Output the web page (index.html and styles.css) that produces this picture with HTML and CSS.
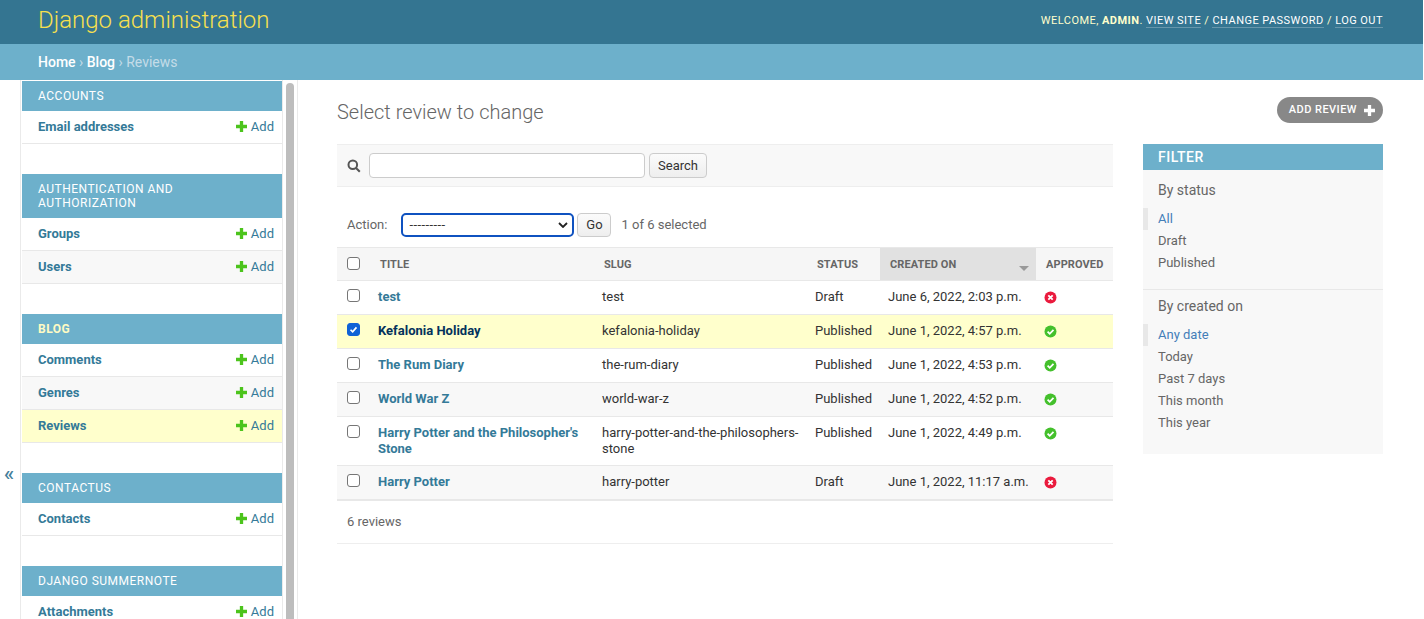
FILE: index.html
```html
<!DOCTYPE html>
<html lang="en">
<head>
<meta charset="utf-8">
<title>Select review to change | Django site admin</title>
<link rel="stylesheet" href="styles.css">
</head>
<body>
<div class="page">
  <header class="header">
    <div class="branding">Django administration</div>
    <div class="user-tools">WELCOME, <strong>ADMIN</strong>. <a href="#">VIEW SITE</a> / <a href="#">CHANGE PASSWORD</a> / <a href="#">LOG OUT</a></div>
  </header>
  <div class="breadcrumbs"><a href="#">Home</a> › <a href="#">Blog</a> › Reviews</div>
  <div class="main">
    <div class="toggle">«</div>
    <nav class="sidebar">
      <div class="modules">
        <section class="module">
          <h2 class="caption">ACCOUNTS</h2>
          <div class="nav-row"><a href="#">Email addresses</a><span class="add"><svg class="plus" viewBox="1 1 10 10"><path d="M4.500 1h3v3.500H11v3H7.500V11h-3V7.500H1v-3h3.500z"/></svg>Add</span></div>
        </section>
        <section class="module">
          <h2 class="caption">AUTHENTICATION AND AUTHORIZATION</h2>
          <div class="nav-row"><a href="#">Groups</a><span class="add"><svg class="plus" viewBox="1 1 10 10"><path d="M4.500 1h3v3.500H11v3H7.500V11h-3V7.500H1v-3h3.500z"/></svg>Add</span></div>
          <div class="nav-row stripe"><a href="#">Users</a><span class="add"><svg class="plus" viewBox="1 1 10 10"><path d="M4.500 1h3v3.500H11v3H7.500V11h-3V7.500H1v-3h3.500z"/></svg>Add</span></div>
        </section>
        <section class="module">
          <h2 class="caption current">BLOG</h2>
          <div class="nav-row"><a href="#">Comments</a><span class="add"><svg class="plus" viewBox="1 1 10 10"><path d="M4.500 1h3v3.500H11v3H7.500V11h-3V7.500H1v-3h3.500z"/></svg>Add</span></div>
          <div class="nav-row stripe"><a href="#">Genres</a><span class="add"><svg class="plus" viewBox="1 1 10 10"><path d="M4.500 1h3v3.500H11v3H7.500V11h-3V7.500H1v-3h3.500z"/></svg>Add</span></div>
          <div class="nav-row selected"><a href="#">Reviews</a><span class="add"><svg class="plus" viewBox="1 1 10 10"><path d="M4.500 1h3v3.500H11v3H7.500V11h-3V7.500H1v-3h3.500z"/></svg>Add</span></div>
        </section>
        <section class="module">
          <h2 class="caption">CONTACTUS</h2>
          <div class="nav-row"><a href="#">Contacts</a><span class="add"><svg class="plus" viewBox="1 1 10 10"><path d="M4.500 1h3v3.500H11v3H7.500V11h-3V7.500H1v-3h3.500z"/></svg>Add</span></div>
        </section>
        <section class="module">
          <h2 class="caption">DJANGO SUMMERNOTE</h2>
          <div class="nav-row"><a href="#">Attachments</a><span class="add"><svg class="plus" viewBox="1 1 10 10"><path d="M4.500 1h3v3.500H11v3H7.500V11h-3V7.500H1v-3h3.500z"/></svg>Add</span></div>
        </section>
      </div>
      <div class="scroll-track"><div class="scroll-thumb"></div></div>
    </nav>
    <main class="content">
      <div class="title-row">
        <h1 class="title">Select review to change</h1>
        <a class="add-btn" href="#">ADD REVIEW<svg class="add-btn-icon" viewBox="1 1 10 10"><path d="M4.500 1h3v3.500H11v3H7.500V11h-3V7.500H1v-3h3.500z"/></svg></a>
      </div>
      <div class="columns">
        <div class="changelist">
          <div class="toolbar">
            <svg class="search-icon" viewBox="0 0 14 14"><circle cx="5.800" cy="5.800" r="4.300"/><path d="M9 9l3.800 3.800"/></svg>
            <input class="search-input" type="text">
            <button class="btn search-btn" type="button">Search</button>
          </div>
          <div class="actions">
            <span class="action-label">Action:</span>
            <select class="action-select"><option>---------</option></select>
            <button class="btn go-btn" type="button">Go</button>
            <span class="counter">1 of 6 selected</span>
          </div>
          <table class="results">
            <colgroup><col class="c-check"><col class="c-title"><col class="c-slug"><col class="c-status"><col class="c-created"><col class="c-approved"></colgroup>
            <thead>
              <tr>
                <th class="check"><input type="checkbox"></th>
                <th>TITLE</th><th>SLUG</th><th>STATUS</th>
                <th class="sorted">CREATED ON<span class="sort-arrow"></span></th>
                <th>APPROVED</th>
              </tr>
            </thead>
            <tbody>
              <tr>
                <td class="check"><input type="checkbox"></td>
                <td><a class="row-link" href="#">test</a></td><td>test</td><td>Draft</td><td class="created">June 6, 2022, 2:03 p.m.</td>
                <td><svg class="state" viewBox="0 0 13 13"><circle class="no" cx="6.500" cy="6.500" r="6"/><path class="mark" d="M4.300 4.300l4.400 4.400M8.700 4.300l-4.400 4.400"/></svg></td>
              </tr>
              <tr class="row-selected">
                <td class="check"><input type="checkbox" checked></td>
                <td><a class="row-link" href="#">Kefalonia Holiday</a></td><td>kefalonia-holiday</td><td>Published</td><td class="created">June 1, 2022, 4:57 p.m.</td>
                <td><svg class="state" viewBox="0 0 13 13"><circle class="yes" cx="6.500" cy="6.500" r="6"/><path class="mark" d="M3.600 6.700l2.100 2.100 3.800-3.900"/></svg></td>
              </tr>
              <tr>
                <td class="check"><input type="checkbox"></td>
                <td><a class="row-link" href="#">The Rum Diary</a></td><td>the-rum-diary</td><td>Published</td><td class="created">June 1, 2022, 4:53 p.m.</td>
                <td><svg class="state" viewBox="0 0 13 13"><circle class="yes" cx="6.500" cy="6.500" r="6"/><path class="mark" d="M3.600 6.700l2.100 2.100 3.800-3.900"/></svg></td>
              </tr>
              <tr class="row-alt">
                <td class="check"><input type="checkbox"></td>
                <td><a class="row-link" href="#">World War Z</a></td><td>world-war-z</td><td>Published</td><td class="created">June 1, 2022, 4:52 p.m.</td>
                <td><svg class="state" viewBox="0 0 13 13"><circle class="yes" cx="6.500" cy="6.500" r="6"/><path class="mark" d="M3.600 6.700l2.100 2.100 3.800-3.900"/></svg></td>
              </tr>
              <tr>
                <td class="check"><input type="checkbox"></td>
                <td><a class="row-link" href="#">Harry Potter and the Philosopher's Stone</a></td><td>harry-potter-and-the-philosophers-stone</td><td>Published</td><td class="created">June 1, 2022, 4:49 p.m.</td>
                <td><svg class="state" viewBox="0 0 13 13"><circle class="yes" cx="6.500" cy="6.500" r="6"/><path class="mark" d="M3.600 6.700l2.100 2.100 3.800-3.900"/></svg></td>
              </tr>
              <tr class="row-alt">
                <td class="check"><input type="checkbox"></td>
                <td><a class="row-link" href="#">Harry Potter</a></td><td>harry-potter</td><td>Draft</td><td class="created">June 1, 2022, 11:17 a.m.</td>
                <td><svg class="state" viewBox="0 0 13 13"><circle class="no" cx="6.500" cy="6.500" r="6"/><path class="mark" d="M4.300 4.300l4.400 4.400M8.700 4.300l-4.400 4.400"/></svg></td>
              </tr>
            </tbody>
          </table>
          <p class="paginator">6 reviews</p>
        </div>
        <aside class="filter">
          <h2 class="filter-title">FILTER</h2>
          <h3 class="filter-heading">By status</h3>
          <ul class="filter-list">
            <li class="on"><a href="#">All</a></li>
            <li><a href="#">Draft</a></li>
            <li><a href="#">Published</a></li>
          </ul>
          <h3 class="filter-heading divided">By created on</h3>
          <ul class="filter-list">
            <li class="on"><a href="#">Any date</a></li>
            <li><a href="#">Today</a></li>
            <li><a href="#">Past 7 days</a></li>
            <li><a href="#">This month</a></li>
            <li><a href="#">This year</a></li>
          </ul>
        </aside>
      </div>
    </main>
  </div>
</div>
</body>
</html>
```
FILE: styles.css
```css
* { box-sizing: border-box; }
html, body { margin: 0; height: 100%; overflow: hidden; background: #fff; }
body { font-family: Roboto, "Liberation Sans", sans-serif; font-size: 14px; color: #333; }
a { text-decoration: none; color: inherit; }
h1, h2, h3, p, ul { margin: 0; padding: 0; }
ul { list-style: none; }
.page { width: 1423px; height: 619px; display: flex; flex-direction: column; overflow: hidden; }

.header { height: 44px; flex: none; background: #347591; padding: 0 40px 4px 38px; display: flex; justify-content: space-between; align-items: center; }
.branding { font-size: 24px; font-weight: 300; color: #f8e04e; }
.user-tools { font-size: 11px; letter-spacing: 0.46px; color: #ffc; }
.user-tools strong { font-weight: 700; }
.user-tools a { color: #fff; border-bottom: 1px solid rgba(255,255,255,0.25); }

.breadcrumbs { height: 36px; flex: none; background: #6db0cb; color: #c4dce8; padding: 0 38px; font-size: 14px; line-height: 36px; }
.breadcrumbs a { color: #fff; font-weight: 500; }

.main { flex: 1; display: flex; min-height: 0; }
.toggle { width: 21px; flex: none; border-right: 1px solid #eaeaea; color: #447e9b; font-size: 21px; font-weight: 500; display: flex; justify-content: center; padding: 383px 2px 0 0; line-height: 1; }
.sidebar { width: 277px; flex: none; border-right: 1px solid #eaeaea; display: flex; overflow: hidden; }
.modules { width: 262px; flex: none; padding-top: 1px; border-right: 1px solid #eaeaea; }
.module { margin-bottom: 30px; }
.caption { background: #6db0cb; color: #fff; font-size: 12px; font-weight: 400; letter-spacing: 0.5px; line-height: 14px; padding: 8px 16px; margin-left: 1px; }
.caption.current { font-weight: 700; color: #fffbc4; }
.nav-row { height: 33px; border-bottom: 1px solid #e8e8e8; padding: 0 8px 2px 16px; margin-left: 1px; display: flex; justify-content: space-between; align-items: center; font-size: 13px; }
.nav-row a { color: #347a98; font-weight: 700; }
.nav-row.stripe { background: #f8f8f8; }
.nav-row.selected { background: #ffc; }
.add { color: #347a98; display: flex; align-items: center; }
.plus { width: 11px; height: 11px; fill: #4cc41c; margin-right: 4px; }
.scroll-track { flex: 1; padding: 3px 3px 0; }
.scroll-thumb { width: 8px; height: 600px; background: #bdbdbd; border-radius: 4px 4px 0 0; }

.content { flex: 1; min-width: 0; padding: 0 40px 0 39px; }
.title-row { display: flex; justify-content: space-between; align-items: center; height: 64px; }
.title { font-size: 20px; font-weight: 300; color: #666; }
.add-btn { background: #888; color: #fff; border-radius: 15px; height: 26px; padding: 0 8px 1px 12px; display: flex; align-items: center; font-size: 11px; font-weight: 500; letter-spacing: 0.45px; margin-top: -4px; }
.add-btn-icon { width: 11px; height: 11px; fill: #fff; margin: 1px 0 0 7px; }
.columns { display: flex; justify-content: space-between; align-items: flex-start; }

.changelist { width: 776px; }
.toolbar { height: 43px; background: #f8f8f8; border-top: 1px solid #eee; border-bottom: 1px solid #eee; display: flex; align-items: center; padding-left: 10px; }
.search-icon { width: 14px; height: 14px; fill: none; stroke: #555; stroke-width: 2; margin-right: 8px; }
.search-input { width: 276px; height: 25px; border: 1px solid #ccc; border-radius: 4px; background: #fff; padding: 2px 5px; margin-right: 4px; }
.btn { background: linear-gradient(#fbfbfb, #eee); border: 1px solid #ccc; border-radius: 4px; color: #333; font-family: inherit; font-size: 13px; padding: 0; }
.search-btn { width: 58px; height: 25px; }
.actions { height: 60px; display: flex; align-items: center; padding-left: 10px; font-size: 13px; color: #666; padding-top: 15px; }
.action-label { margin-right: 14px; }
.action-select { appearance: none; width: 173px; height: 24px; border: 2px solid #0f52c0; border-radius: 5px; background: #fff url("data:image/svg+xml,%3Csvg xmlns='http://www.w3.org/2000/svg' width='10' height='6'%3E%3Cpath d='M1 1l4 4 4-4' fill='none' stroke='%23222' stroke-width='1.800'/%3E%3C/svg%3E") no-repeat right 4px center; font-family: inherit; font-size: 13px; letter-spacing: 0.4px; padding: 0 6px; color: #333; margin-right: 3px; }
.go-btn { width: 34px; height: 24px; margin-right: 10px; }
.counter { color: #666; }

.results { width: 776px; table-layout: fixed; border-collapse: collapse; font-size: 13px; }
.c-check { width: 33px; } .c-title { width: 224px; } .c-slug { width: 213px; } .c-status { width: 73px; } .c-created { width: 156px; } .c-approved { width: 77px; }
.results thead tr { background: #f6f6f6; }
.results th { height: 33px; padding: 0 10px; text-align: left; font-size: 11px; font-weight: 700; color: #666; letter-spacing: 0.1px; border-top: 1px solid #e8e8e8; border-bottom: 1px solid #e8e8e8; position: relative; white-space: nowrap; }
.results th.sorted { background: #e1e1e1; }
.sort-arrow { position: absolute; right: 7px; top: 18px; border-left: 5px solid transparent; border-right: 5px solid transparent; border-top: 5px solid #999; }
.results td { height: 34px; padding: 8px; line-height: 16px; vertical-align: top; border-bottom: 1px solid #e8e8e8; color: #333; }
.results td.created { white-space: nowrap; }
.results tbody tr:last-child td { border-bottom: 2px solid #e8e8e8; }
.results .check { padding: 0 10px; }
.results td.check { padding: 8px 10px 0; }
.results th.check { vertical-align: top; padding-top: 9px; }
.row-alt td { background: #f8f8f8; }
.row-selected td { background: #ffc; }
.row-link { color: #347a98; font-weight: 700; }
.row-selected .row-link { color: #03325c; }
input[type=checkbox] { appearance: none; display: block; width: 13px; height: 13px; margin: 0; border: 1px solid #767676; border-radius: 3px; background: #fff; }
input[type=checkbox]:checked { border-color: #0f62d6; background: #0f62d6 url("data:image/svg+xml,%3Csvg xmlns='http://www.w3.org/2000/svg' viewBox='0 0 13 13'%3E%3Cpath d='M3 6.800l2.500 2.500 4.500-5.300' fill='none' stroke='%23fff' stroke-width='2'/%3E%3C/svg%3E") center/100% no-repeat; }
.state { display: block; width: 13px; height: 13px; margin: 2px 0 0; }
.state .no { fill: #ea1a3d; }
.state .yes { fill: #44c02c; }
.state .mark { fill: none; stroke: #fff; stroke-width: 1.800; }
.paginator { height: 43px; line-height: 41px; padding-left: 10px; font-size: 13px; color: #666; border-bottom: 1px solid #eee; }

.filter { width: 240px; height: 310px; background: #f8f8f8; font-size: 13px; }
.filter-title { height: 26px; background: #6db0cb; color: #fff; font-size: 14px; font-weight: 500; letter-spacing: 0.5px; line-height: 26px; padding-left: 15px; }
.filter-heading { font-size: 14px; font-weight: 400; color: #666; padding: 12px 15px 0; line-height: 16px; }
.filter-heading.divided { border-top: 1px solid #e8e8e8; margin-top: 15px; padding-top: 8px; }
.filter-list { margin-top: 10px; }
.filter-list li { height: 22px; line-height: 22px; padding-left: 15px; color: #666; }
.filter-list li.on { color: #447eb8; border-left: 5px solid #e8e8e8; padding-left: 10px; }
```
